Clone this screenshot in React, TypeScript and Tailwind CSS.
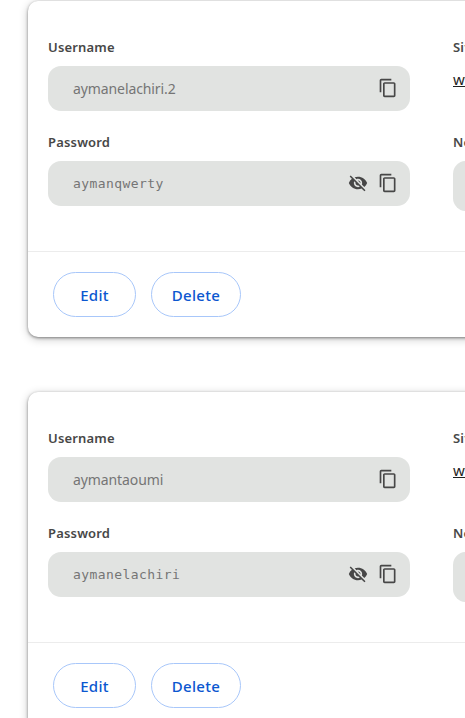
import React from "react";
import { MdContentCopy, MdVisibilityOff } from "react-icons/md";

type Entry = { username: string; password: string; site: string };

const entries: Entry[] = [
  { username: "aymanelachiri.2", password: "aymanqwerty", site: "www.netflix.com" },
  { username: "aymantaoumi", password: "aymanelachiri", site: "www.netflix.com" },
];

function Label({ children }: { children: React.ReactNode }) {
  return (
    <div className="h-[19px] whitespace-nowrap text-[13px] font-semibold leading-[19px] tracking-[0.18px] text-[#474747]">
      {children}
    </div>
  );
}

function Card({ username, password, site }: Entry) {
  return (
    <section className="h-[336px] w-[800px] shrink-0 rounded-[10px] bg-white shadow-[0_1px_3px_rgba(0,0,0,0.42),0_2px_10px_rgba(0,0,0,0.22)]">
      <div className="flex h-[250px] gap-[43px] pl-5 pt-[37px]">
        <div className="w-[362px] shrink-0">
          <Label>Username</Label>
          <div className="mt-[9px] flex h-[45px] items-center justify-between rounded-[13px] bg-[#e1e3e1] pl-[25px] pr-3">
            <span className="text-[14px] tracking-[-0.1px] text-[#757575]">{username}</span>
            <MdContentCopy className="mb-px size-5 text-[#474747]" />
          </div>
          <div className="mt-[22px]">
            <Label>Password</Label>
          </div>
          <div className="mt-[9px] flex h-[45px] items-center rounded-[13px] bg-[#e1e3e1] pl-[25px] pr-3">
            <span className="flex-1 font-['DejaVu_Sans_Mono',monospace] text-[13px] tracking-[0.42px] text-[#757575]">
              {password}
            </span>
            <MdVisibilityOff className="mb-px mr-[10px] size-5 text-[#474747]" />
            <MdContentCopy className="mb-px size-5 text-[#474747]" />
          </div>
        </div>
        <div className="w-[362px] shrink-0">
          <Label>Sites</Label>
          <div className="mt-3 h-5 text-[15px] leading-5 text-[#1f1f1f] underline underline-offset-1">{site}</div>
          <div className="mt-11">
            <Label>Note</Label>
          </div>
          <div className="mt-[9px] h-[50px] rounded-[13px] bg-[#e1e3e1]" />
        </div>
      </div>
      <div className="flex gap-[15px] border-t border-[#ececec] pl-[25px] pt-5">
        <button className="h-[45px] w-[83px] rounded-full border border-[#a8c7fa] pt-0.5 text-[15px] font-medium tracking-[0.3px] text-[#0b57d0]">
          Edit
        </button>
        <button className="h-[45px] w-[90px] rounded-full border border-[#a8c7fa] pt-0.5 text-[15px] font-medium tracking-[0.3px] text-[#0b57d0]">
          Delete
        </button>
      </div>
    </section>
  );
}

export default function App() {
  return (
    <main className="flex h-[718px] w-[465px] flex-col gap-[55px] overflow-hidden bg-white pl-7 pt-px font-['Noto_Sans',sans-serif]">
      {entries.map((entry) => (
        <Card key={entry.username} {...entry} />
      ))}
    </main>
  );
}
